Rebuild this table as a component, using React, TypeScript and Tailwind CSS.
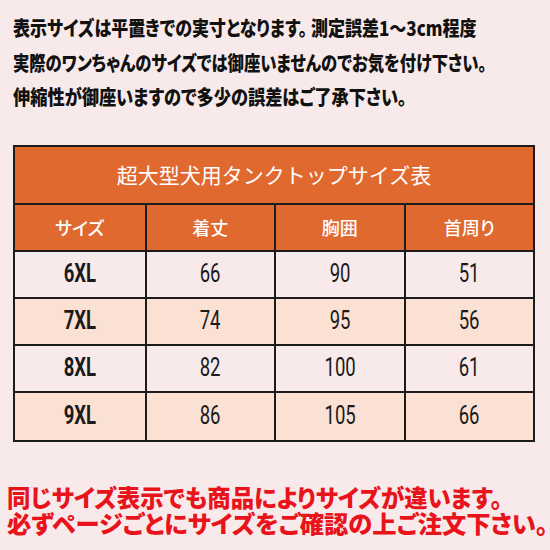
import React from "react";

const rows = [
  { size: "6XL", length: 66, chest: 90, neck: 51 },
  { size: "7XL", length: 74, chest: 95, neck: 56 },
  { size: "8XL", length: 82, chest: 100, neck: 61 },
  { size: "9XL", length: 86, chest: 105, neck: 66 },
];

const jp = "font-['Noto_Sans_CJK_JP','Noto_Sans',sans-serif]";
const palt = "[font-feature-settings:'palt']";

// the reference uses a condensed face, squeeze Roboto to match
const Num = ({ children, bold = false }: { children: React.ReactNode; bold?: boolean }) => (
  <span className={`inline-block scale-x-[0.74] font-['Roboto',sans-serif] text-[25px] ${bold ? "font-bold" : "font-normal"}`}>
    {children}
  </span>
);

export default function App() {
  return (
    <div className="w-[550px] h-[550px] bg-[#f8eaea] flex flex-col overflow-hidden">
      <div className={`pt-[11px] pl-[13px] text-[20px] leading-[34.5px] font-black text-[#111] whitespace-nowrap ${jp} ${palt}`}>
        <div><span className="inline-block origin-left scale-x-[0.85]">表示サイズは平置きでの実寸となります。 測定誤差1〜3cm程度</span></div>
        <div><span className="inline-block origin-left scale-x-[0.815]">実際のワンちゃんのサイズでは御座いませんのでお気を付け下さい。</span></div>
        <div><span className="inline-block origin-left scale-x-[0.86]">伸縮性が御座いますので多少の誤差はご了承下さい。</span></div>
      </div>

      <div className="mt-[30px] ml-[13px] w-[522px] border-2 border-[#1c1c1c]">
        <div className={`h-[58px] bg-[#e0692f] border-b-2 border-[#1c1c1c] flex items-center justify-center text-white text-[21px] ${jp}`}>
          超大型犬用タンクトップサイズ表
        </div>
        <div className={`grid grid-cols-4 h-[47px] bg-[#e0692f] border-b-2 border-[#1c1c1c] text-white text-[18px] font-medium ${jp} ${palt}`}>
          <div className="flex items-center justify-center">サイズ</div>
          <div className="flex items-center justify-center border-l-2 border-[#1c1c1c]">着丈</div>
          <div className="flex items-center justify-center border-l-2 border-[#1c1c1c]">胸囲</div>
          <div className="flex items-center justify-center border-l-2 border-[#1c1c1c]">首周り</div>
        </div>
        {rows.map((r, i) => (
          <div
            key={r.size}
            className={`grid grid-cols-4 h-[47px] text-[#1a1a1a] ${i % 2 === 1 ? "bg-[#fbe0d4]" : "bg-[#f8eaea]"} ${i < rows.length - 1 ? "border-b-2 border-[#1c1c1c]" : ""}`}
          >
            <div className="flex items-center justify-center"><Num bold>{r.size}</Num></div>
            <div className="flex items-center justify-center border-l-2 border-[#1c1c1c]"><Num>{r.length}</Num></div>
            <div className="flex items-center justify-center border-l-2 border-[#1c1c1c]"><Num>{r.chest}</Num></div>
            <div className="flex items-center justify-center border-l-2 border-[#1c1c1c]"><Num>{r.neck}</Num></div>
          </div>
        ))}
      </div>

      <div className={`mt-[42px] pl-[7px] text-[24px] leading-[26px] font-black text-[#e8131b] whitespace-nowrap ${jp} ${palt}`}>
        <div><span className="inline-block origin-left scale-x-[0.975]">同じサイズ表示でも商品によりサイズが違います。</span></div>
        <div><span className="inline-block origin-left scale-x-[1.012]">必ずページごとにサイズをご確認の上ご注文下さい。</span></div>
      </div>
    </div>
  );
}
